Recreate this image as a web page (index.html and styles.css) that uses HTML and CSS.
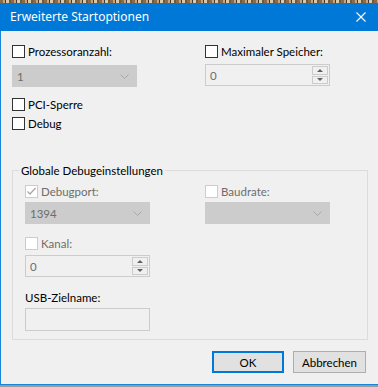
FILE: index.html
```html
<!DOCTYPE html>
<html lang="de">
<head>
    <meta charset="UTF-8">
    <title>Erweiterte Startoptionen</title>
    <link rel="stylesheet" href="styles.css">
</head>
<body>
    <div class="desktop-strip"></div>

    <div class="window">
        <div class="titlebar">
            <span class="title">Erweiterte Startoptionen</span>
            <svg class="close" width="10" height="10" viewBox="0 0 10 10">
                <path d="M0.5 0.5L9.5 9.5M9.5 0.5L0.5 9.5" stroke="#fff" stroke-width="1.1" fill="none"/>
            </svg>
        </div>

        <div class="content">
            <div class="top-grid">
                <div class="col">
                    <div class="check"><span class="box"></span>Prozessoranzahl:</div>
                    <div class="combo combo-top">
                        <span class="value">1</span>
                        <svg class="chevron" width="9" height="5" viewBox="0 0 9 5"><path d="M0.5 0.5L4.5 4.5L8.5 0.5" stroke="#a8a8a8" fill="none"/></svg>
                    </div>
                    <div class="check pci"><span class="box"></span>PCI-Sperre</div>
                    <div class="check debug"><span class="box"></span>Debug</div>
                </div>
                <div class="col">
                    <div class="check"><span class="box"></span>Maximaler Speicher:</div>
                    <div class="spin spin-top">
                        <span class="value">0</span>
                        <div class="spin-buttons">
                            <span class="spin-btn"><span class="arrow-up"></span></span>
                            <span class="spin-btn"><span class="arrow-down"></span></span>
                        </div>
                    </div>
                </div>
            </div>

            <fieldset class="group">
                <legend>Globale Debugeinstellungen</legend>
                <div class="group-grid">
                    <div class="col">
                        <div class="check disabled">
                            <span class="box">
                                <svg width="11" height="11" viewBox="0 0 11 11"><path d="M1.5 5.5L4 8L9.5 2" stroke="#a8a8a8" stroke-width="1.3" fill="none"/></svg>
                            </span>Debugport:
                        </div>
                        <div class="combo">
                            <span class="value">1394</span>
                            <svg class="chevron" width="9" height="5" viewBox="0 0 9 5"><path d="M0.5 0.5L4.5 4.5L8.5 0.5" stroke="#a8a8a8" fill="none"/></svg>
                        </div>
                        <div class="check disabled kanal"><span class="box"></span>Kanal:</div>
                        <div class="spin">
                            <span class="value">0</span>
                            <div class="spin-buttons">
                                <span class="spin-btn"><span class="arrow-up"></span></span>
                                <span class="spin-btn"><span class="arrow-down"></span></span>
                            </div>
                        </div>
                        <div class="field-label">USB-Zielname:</div>
                        <div class="textbox"></div>
                    </div>
                    <div class="col">
                        <div class="check disabled"><span class="box"></span>Baudrate:</div>
                        <div class="combo">
                            <span class="value"></span>
                            <svg class="chevron" width="9" height="5" viewBox="0 0 9 5"><path d="M0.5 0.5L4.5 4.5L8.5 0.5" stroke="#a8a8a8" fill="none"/></svg>
                        </div>
                    </div>
                </div>
            </fieldset>

            <div class="buttons">
                <button class="btn btn-default">OK</button>
                <button class="btn">Abbrechen</button>
            </div>
        </div>
    </div>
</body>
</html>
```

FILE: styles.css
```css
* {
    margin: 0;
    padding: 0;
    box-sizing: border-box;
}

body {
    width: 378px;
    height: 387px;
    overflow: hidden;
    background: #9a9a9a;
    font-family: Lato, "Noto Sans", sans-serif;
    font-size: 11.5px;
    color: #000;
}

.desktop-strip {
    height: 3px;
    background: repeating-linear-gradient(90deg, #8c6b48 0 3px, #c9a478 3px 5px, #3c3a36 5px 6px, #d9c7a9 6px 9px, #6f5a3d 9px 11px);
}

.window {
    width: 378px;
    border-left: 1px solid #1883d7;
    border-bottom: 1px solid #1883d7;
    background: #f0f0f0;
}

.titlebar {
    height: 28px;
    margin-left: -1px;
    background: #0078d7;
    color: #fff;
    display: flex;
    align-items: center;
    justify-content: space-between;
    padding: 0 12px 0 10px;
}

.title {
    font-family: "Noto Sans", sans-serif;
    font-size: 12px;
    line-height: 16px;
}

.close {
    display: block;
}

.content {
    height: 353px;
    padding-left: 11px;
}

.top-grid {
    display: grid;
    grid-template-columns: 193px 1fr;
    padding-top: 14px;
}

.col {
    display: flex;
    flex-direction: column;
}

.check {
    display: flex;
    align-items: center;
    gap: 3px;
    height: 13px;
    line-height: 13px;
    white-space: nowrap;
}

.check .box {
    width: 13px;
    height: 13px;
    flex: none;
    border: 1px solid #333;
    background: #fff;
    display: flex;
    align-items: center;
    justify-content: center;
}

.check.disabled {
    color: #6d6d6d;
}

.check.disabled .box {
    border-color: #cccccc;
}

.check.pci {
    margin-top: 11px;
}

.check.debug {
    margin-top: 6px;
}

.check.kanal {
    margin-top: 13px;
}

.combo {
    width: 125px;
    height: 22px;
    margin-top: 4px;
    background: #cccccc;
    border: 1px solid #cccccc;
    display: flex;
    align-items: center;
    justify-content: space-between;
    padding: 0 7px 0 4px;
    color: #6d6d6d;
}

.combo-top {
    margin-top: 7px;
}

.chevron {
    display: block;
}

.spin {
    width: 125px;
    height: 22px;
    margin-top: 5px;
    border: 1px solid #cccccc;
    background: #f0f0f0;
    display: flex;
    align-items: center;
    justify-content: space-between;
    padding-left: 4px;
    color: #6d6d6d;
}

.spin-top {
    margin-top: 6px;
}

.spin-buttons {
    width: 17px;
    height: 20px;
    display: flex;
    flex-direction: column;
    gap: 1px;
    padding: 1px 1px 1px 0;
}

.spin-btn {
    flex: 1;
    border: 1px solid #cccccc;
    display: flex;
    align-items: center;
    justify-content: center;
}

.arrow-up {
    width: 0;
    height: 0;
    border-left: 3px solid transparent;
    border-right: 3px solid transparent;
    border-bottom: 3px solid #606060;
}

.arrow-down {
    width: 0;
    height: 0;
    border-left: 3px solid transparent;
    border-right: 3px solid transparent;
    border-top: 3px solid #606060;
}

.group {
    width: 356px;
    margin-top: 33px;
    border: 1px solid #dcdcdc;
    padding: 7px 0 8px 12px;
}

.group legend {
    margin-left: -6px;
    padding: 0 2px;
    line-height: 15px;
}

.group-grid {
    display: grid;
    grid-template-columns: 180px 1fr;
}

.field-label {
    margin-top: 13px;
    line-height: 15px;
}

.textbox {
    width: 125px;
    height: 23px;
    margin-top: 3px;
    border: 1px solid #cccccc;
    background: #f0f0f0;
}

.buttons {
    display: flex;
    justify-content: flex-end;
    gap: 9px;
    margin-top: 11px;
    padding-right: 12px;
}

.btn {
    width: 73px;
    height: 22px;
    font-family: inherit;
    font-size: 11.5px;
    background: #e1e1e1;
    border: 1px solid #adadad;
    color: #000;
}

.btn-default {
    width: 72px;
    border: 2px solid #0078d7;
}
```
